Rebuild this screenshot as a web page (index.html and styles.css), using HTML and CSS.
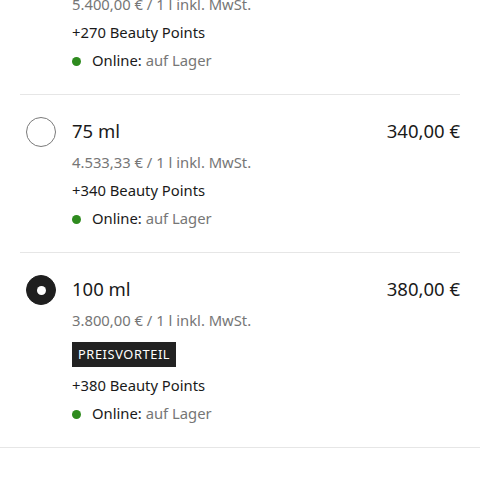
FILE: index.html
```html
<!DOCTYPE html>
<html lang="de">
<head>
<meta charset="utf-8">
<link rel="stylesheet" href="styles.css">
</head>
<body>
<div class="list">
  <div class="item">
    <div class="radio-col"><span class="radio"></span></div>
    <div class="content">
      <div class="title">50 ml</div>
      <div class="unit">5.400,00 € / 1 l inkl. MwSt.</div>
      <div class="line">+270 Beauty Points</div>
      <div class="line"><span class="dot"></span>Online: <span class="muted">auf Lager</span></div>
    </div>
    <div class="price">270,00 €</div>
  </div>
  <div class="item">
    <div class="radio-col"><span class="radio"></span></div>
    <div class="content">
      <div class="title">75 ml</div>
      <div class="unit">4.533,33 € / 1 l inkl. MwSt.</div>
      <div class="line">+340 Beauty Points</div>
      <div class="line"><span class="dot"></span>Online: <span class="muted">auf Lager</span></div>
    </div>
    <div class="price">340,00 €</div>
  </div>
  <div class="item">
    <div class="radio-col"><span class="radio checked"></span></div>
    <div class="content">
      <div class="title">100 ml</div>
      <div class="unit">3.800,00 € / 1 l inkl. MwSt.</div>
      <div class="badge">PREISVORTEIL</div>
      <div class="line">+380 Beauty Points</div>
      <div class="line"><span class="dot"></span>Online: <span class="muted">auf Lager</span></div>
    </div>
    <div class="price">380,00 €</div>
  </div>
</div>
<div class="separator"></div>
</body>
</html>
```
FILE: styles.css
```css
html, body {
  margin: 0;
  padding: 0;
  background: #fff;
  overflow: hidden;
}
body {
  font-family: "Noto Sans", "Open Sans", sans-serif;
  font-weight: 400;
  color: #1a1a1a;
  font-size: 14.8px;
}
.list {
  margin-top: -63px;
  padding: 0 20px;
}
.item {
  display: flex;
  align-items: flex-start;
  padding: 24px 0 20px 0;
}
.item + .item {
  border-top: 1px solid #e6e6e6;
}
.radio-col {
  width: 36px;
  padding-left: 6px;
  box-sizing: border-box;
  margin-right: 16px;
  flex: none;
}
.radio {
  display: block;
  width: 30px;
  height: 30px;
  box-sizing: border-box;
  border-radius: 50%;
  border: 1.5px solid #7a7a7a;
  margin-top: -2px;
  position: relative;
}
.radio.checked {
  background: #1f1f1f;
  border-color: #1f1f1f;
}
.radio.checked::after {
  content: "";
  position: absolute;
  left: 50%;
  top: 50%;
  width: 9px;
  height: 9px;
  margin: -4.5px 0 0 -4.5px;
  border-radius: 50%;
  background: #fff;
}
.content {
  flex: 1;
}
.title {
  font-size: 18.5px;
  line-height: 24px;
  margin-bottom: 5px;
}
.price {
  font-size: 18.5px;
  line-height: 24px;
  flex: none;
}
.unit {
  line-height: 28px;
  color: #767676;
}
.line {
  line-height: 28px;
}
.dot {
  display: inline-block;
  width: 9px;
  height: 9px;
  border-radius: 50%;
  background: #2e8b1e;
  margin-right: 11px;
  vertical-align: 0;
}
.muted {
  color: #767676;
}
.badge {
  display: inline-block;
  margin-top: 8px;
  margin-bottom: 4px;
  background: #222;
  color: #fff;
  font-size: 12.8px;
  letter-spacing: 0.6px;
  line-height: 25px;
  padding: 0 6px;
}
.separator {
  border-top: 1px solid #e6e6e6;
}
```
